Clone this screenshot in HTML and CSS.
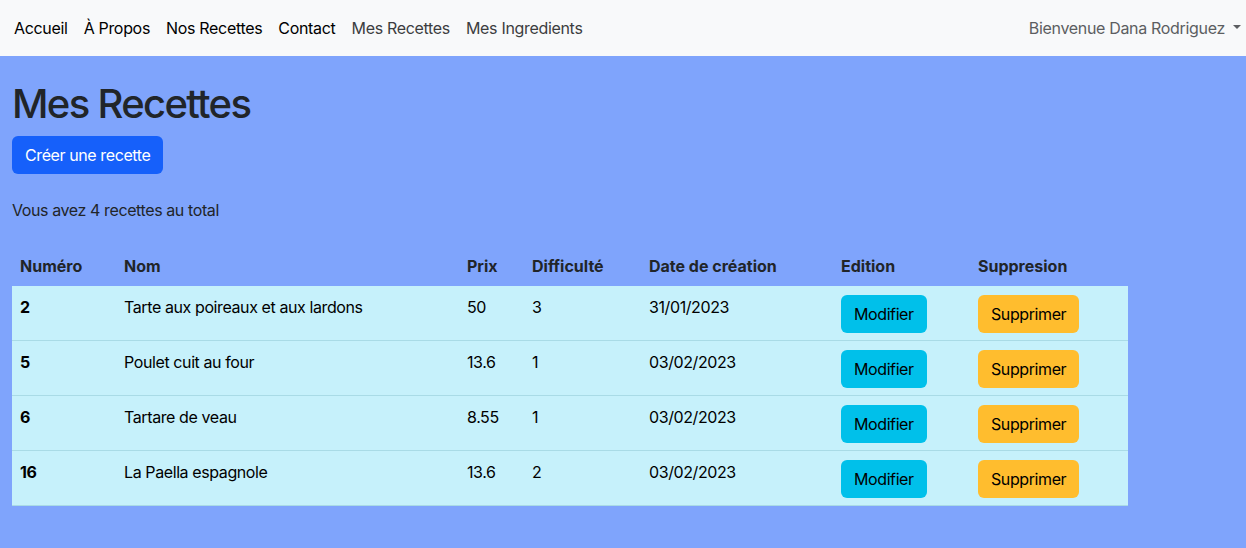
FILE: index.html
```html
<!DOCTYPE html>
<html lang="fr">
<head>
<meta charset="utf-8">
<title>Mes Recettes</title>
<link rel="stylesheet" href="styles.css">
</head>
<body>
<nav class="navbar">
  <ul class="nav-links">
    <li><a class="nav-link main" href="#">Accueil</a></li>
    <li><a class="nav-link main" href="#">À Propos</a></li>
    <li><a class="nav-link main" href="#">Nos Recettes</a></li>
    <li><a class="nav-link main" href="#">Contact</a></li>
    <li><a class="nav-link user" href="#">Mes Recettes</a></li>
    <li><a class="nav-link user" href="#">Mes Ingredients</a></li>
  </ul>
  <a class="nav-link welcome" href="#">Bienvenue Dana Rodriguez<span class="caret"></span></a>
</nav>
<main class="content">
  <h1 class="title">Mes Recettes</h1>
  <a class="btn btn-primary" href="#">Créer une recette</a>
  <p class="total">Vous avez 4 recettes au total</p>
  <table class="recipes">
    <thead>
      <tr>
        <th class="c-num">Numéro</th>
        <th class="c-nom">Nom</th>
        <th class="c-prix">Prix</th>
        <th class="c-diff">Difficulté</th>
        <th class="c-date">Date de création</th>
        <th class="c-edit">Edition</th>
        <th class="c-del">Suppresion</th>
      </tr>
    </thead>
    <tbody>
      <tr>
        <th>2</th><td>Tarte aux poireaux et aux lardons</td><td>50</td><td>3</td><td>31/01/2023</td>
        <td><a class="btn btn-info" href="#">Modifier</a></td><td><a class="btn btn-warning" href="#">Supprimer</a></td>
      </tr>
      <tr>
        <th>5</th><td>Poulet cuit au four</td><td>13.6</td><td>1</td><td>03/02/2023</td>
        <td><a class="btn btn-info" href="#">Modifier</a></td><td><a class="btn btn-warning" href="#">Supprimer</a></td>
      </tr>
      <tr>
        <th>6</th><td>Tartare de veau</td><td>8.55</td><td>1</td><td>03/02/2023</td>
        <td><a class="btn btn-info" href="#">Modifier</a></td><td><a class="btn btn-warning" href="#">Supprimer</a></td>
      </tr>
      <tr>
        <th>16</th><td>La Paella espagnole</td><td>13.6</td><td>2</td><td>03/02/2023</td>
        <td><a class="btn btn-info" href="#">Modifier</a></td><td><a class="btn btn-warning" href="#">Supprimer</a></td>
      </tr>
    </tbody>
  </table>
</main>
</body>
</html>
```
FILE: styles.css
```css
* { box-sizing: border-box; }
html, body { margin: 0; padding: 0; }
body {
  background: #7fa4fc;
  color: #212529;
  font-family: Inter, "Noto Sans", "Liberation Sans", sans-serif;
  font-size: 16px;
  line-height: 1.5;
  letter-spacing: -0.025em;
}
.navbar {
  height: 56px;
  background: #f8f9fa;
  display: flex;
  align-items: center;
  justify-content: space-between;
  padding: 0 5px 0 6px;
  letter-spacing: -0.02em;
}
.nav-links {
  list-style: none;
  margin: 0;
  padding: 0;
  display: flex;
}
.nav-link {
  display: block;
  padding: 8px 8px;
  text-decoration: none;
  font-size: 16px;
}
.nav-link.main { color: #000; }
.nav-link.user { color: #3c3d3f; }
.nav-link.welcome {
  color: #5c5e61;
  display: flex;
  align-items: center;
  padding-right: 0;
}
.caret {
  display: inline-block;
  margin-left: 8px;
  border-top: 4.5px solid #5c5e61;
  border-left: 4.5px solid transparent;
  border-right: 4.5px solid transparent;
  margin-top: -2px;
}
.content { padding: 0 12px; }
.title {
  margin: 0;
  padding-top: 24px;
  font-size: 40px;
  font-weight: 500;
  line-height: 1.2;
  margin-bottom: 8px;
  letter-spacing: -0.042em;
}
.btn {
  display: inline-block;
  padding: 6px 12px;
  border-radius: 6px;
  text-decoration: none;
  font-size: 16px;
  line-height: 24px;
  border: 1px solid transparent;
}
.btn-primary { background: #1660fa; color: #fff; }
.btn-info { background: #00c0ea; color: #000; }
.btn-warning { background: #ffbd2e; color: #000; }
.total { margin: 24px 0 25px; }
.recipes {
  width: 1116px;
  border-collapse: collapse;
}
.recipes th, .recipes td {
  text-align: left;
  vertical-align: top;
  padding: 9px 8px 7px;
}
.recipes thead th {
  font-weight: 700;
  color: #212529;
  padding: 7px 8px 8px;
  letter-spacing: 0;
}
.recipes tbody tr {
  background: #c6f1fb;
  color: #000;
  border-bottom: 1px solid #a9dbe6;
}
.recipes tbody th { font-weight: 700; }
.c-num { width: 104px; }
.c-nom { width: 343px; }
.c-prix { width: 65px; }
.c-diff { width: 117px; }
.c-date { width: 192px; }
.c-edit { width: 137px; }
```
